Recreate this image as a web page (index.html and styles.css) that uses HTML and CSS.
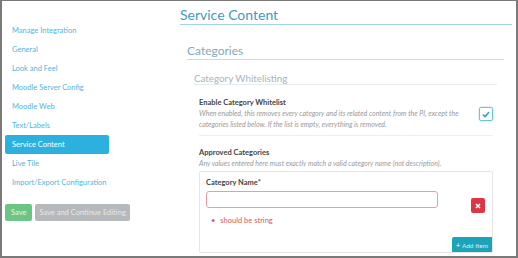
FILE: index.html
```html
<!DOCTYPE html>
<html lang="en">
<head>
  <meta charset="UTF-8">
  <title>Service Content</title>
  <link rel="stylesheet" href="styles.css">
</head>
<body>
  <div class="frame">
    <aside class="sidebar">
      <nav class="side-nav">
        <a href="#" class="side-link">Manage Integration</a>
        <a href="#" class="side-link">General</a>
        <a href="#" class="side-link">Look and Feel</a>
        <a href="#" class="side-link">Moodle Server Config</a>
        <a href="#" class="side-link">Moodle Web</a>
        <a href="#" class="side-link">Text/Labels</a>
        <a href="#" class="side-link active">Service Content</a>
        <a href="#" class="side-link">Live Tile</a>
        <a href="#" class="side-link">Import/Export Configuration</a>
      </nav>
      <div class="side-actions">
        <button class="btn btn-save">Save</button>
        <button class="btn btn-continue">Save and Continue Editing</button>
      </div>
    </aside>
    <main class="content">
      <h1 class="page-title">Service Content</h1>
      <section class="section">
        <h2 class="section-title">Categories</h2>
        <div class="group">
          <h3 class="group-title">Category Whitelisting</h3>
          <div class="field field-row">
            <div class="field-text">
              <div class="field-label">Enable Category Whitelist</div>
              <div class="field-help">When enabled, this removes every category and its related content from the PI, except the categories listed below. If the list is empty, everything is removed.</div>
            </div>
            <span class="checkbox">
              <svg width="8" height="7" viewBox="0 0 8 7"><path d="M1 3.6 L3 5.5 L7 1.2" fill="none" stroke="#2a9fd6" stroke-width="1.6"/></svg>
            </span>
          </div>
          <div class="field">
            <div class="field-label">Approved Categories</div>
            <div class="field-help">Any values entered here must exactly match a valid category name (not description).</div>
            <div class="item-card">
              <div class="item-row">
                <div class="item-main">
                  <label class="item-label">Category Name*</label>
                  <input class="item-input" type="text">
                  <ul class="errors">
                    <li>should be string</li>
                  </ul>
                </div>
                <button class="btn-remove">
                  <svg width="6" height="6" viewBox="0 0 6 6"><path d="M1 1 L5 5 M5 1 L1 5" stroke="#fff" stroke-width="1.6"/></svg>
                </button>
              </div>
              <div class="item-footer">
                <button class="btn-add"><span class="plus">+</span> Add Item</button>
              </div>
            </div>
          </div>
        </div>
      </section>
    </main>
  </div>
</body>
</html>
```

FILE: styles.css
```css
* {
  box-sizing: border-box;
}
body {
  margin: 0;
  font-family: 'Lato', sans-serif;
  background: #fff;
}
.frame {
  width: 518px;
  height: 258px;
  border: 1px solid #7a7a7a;
  border-width: 1px 2px 2px 2px;
  display: flex;
  overflow: hidden;
}
.sidebar {
  width: 176px;
  padding: 20px 0 0 3px;
}
.side-nav {
  display: flex;
  flex-direction: column;
  width: 104px;
}
.side-link {
  display: block;
  height: 19px;
  line-height: 19px;
  padding-left: 7px;
  font-size: 7.5px;
  color: #4fb5e0;
  text-decoration: none;
  white-space: nowrap;
}
.side-link.active {
  background: #2cb1de;
  color: #fff;
  border-radius: 2px;
}
.side-actions {
  display: flex;
  gap: 3px;
  margin-top: 12px;
}
.btn {
  height: 17px;
  padding: 0 4px;
  border: none;
  border-radius: 2px;
  font-family: inherit;
  font-size: 7.5px;
  cursor: pointer;
}
.btn-save {
  padding: 0 6px;
  background: #6cc585;
  color: #e8f6ec;
}
.btn-continue {
  background: #b6b9bc;
  color: #e6e7e8;
}
.content {
  flex: 1;
  padding: 4px 4px 0 2px;
}
.page-title {
  margin: 0;
  font-size: 14px;
  font-weight: normal;
  color: #3d9cc1;
  line-height: 19px;
  border-bottom: 1px solid #a3d2e3;
}
.section {
  padding: 14px 8px 0 7px;
}
.section-title {
  margin: 0;
  font-size: 12px;
  font-weight: normal;
  color: #86a8bb;
  line-height: 17px;
  padding-top: 3px;
  border-bottom: 1px solid #bde0ec;
}
.group {
  padding: 12px 7px 0 7px;
}
.group-title {
  margin: 0;
  font-size: 9.8px;
  font-weight: normal;
  color: #a8b4ba;
  line-height: 12px;
  border-bottom: 1px solid #e6ecee;
}
.field {
  padding: 0 4px 0 5px;
}
.field-row {
  display: flex;
  align-items: center;
  gap: 20px;
  padding-top: 13px;
  padding-bottom: 5px;
  border-bottom: 1px solid #eeeeee;
  margin: 0 4px 0 5px;
  padding-left: 0;
  padding-right: 0;
}
.field-text {
  flex: 1;
}
.field-label {
  font-size: 7.5px;
  font-weight: bold;
  color: #444;
  line-height: 10px;
}
.field-help {
  font-size: 7px;
  font-style: italic;
  color: #9a9a9a;
  line-height: 11px;
}
.checkbox {
  width: 14px;
  height: 14px;
  border: 1px solid #6cc3ea;
  border-radius: 2px;
  display: flex;
  align-items: center;
  justify-content: center;
  box-shadow: 0 0 2px #9bd6f0;
}
.field + .field {
  padding-top: 12px;
}
.item-card {
  margin-top: 2px;
  border: 1px solid #e6e6e6;
  border-radius: 2px;
  height: 82px;
  padding: 6px 0 0 6px;
  display: flex;
  flex-direction: column;
}
.item-row {
  display: flex;
  align-items: flex-start;
  gap: 33px;
}
.item-main {
  width: 232px;
}
.item-label {
  display: block;
  font-size: 7.5px;
  font-weight: bold;
  color: #444;
  line-height: 10px;
}
.item-input {
  display: block;
  width: 232px;
  height: 17px;
  margin-top: 3px;
  border: 1px solid #ee9ba3;
  border-radius: 3px;
  outline: none;
}
.errors {
  margin: 8px 0 0 0;
  padding-left: 5px;
  list-style: none;
  font-size: 7.5px;
  color: #e05561;
  line-height: 10px;
}
.errors li::before {
  content: "\2022";
  margin-right: 5px;
}
.btn-remove {
  width: 14px;
  height: 15px;
  border: none;
  border-radius: 2px;
  background: #dc3545;
  display: flex;
  align-items: center;
  justify-content: center;
  padding: 0;
  margin-top: 20px;
}
.item-footer {
  margin-top: auto;
  display: flex;
  justify-content: flex-end;
}
.btn-add {
  height: 15px;
  padding: 0 4px;
  border: none;
  border-radius: 2px 0 0 0;
  background: #1ba3b9;
  color: #d8f1f5;
  font-family: inherit;
  font-size: 6.5px;
}
.plus {
  font-weight: bold;
  font-size: 8px;
}
```
